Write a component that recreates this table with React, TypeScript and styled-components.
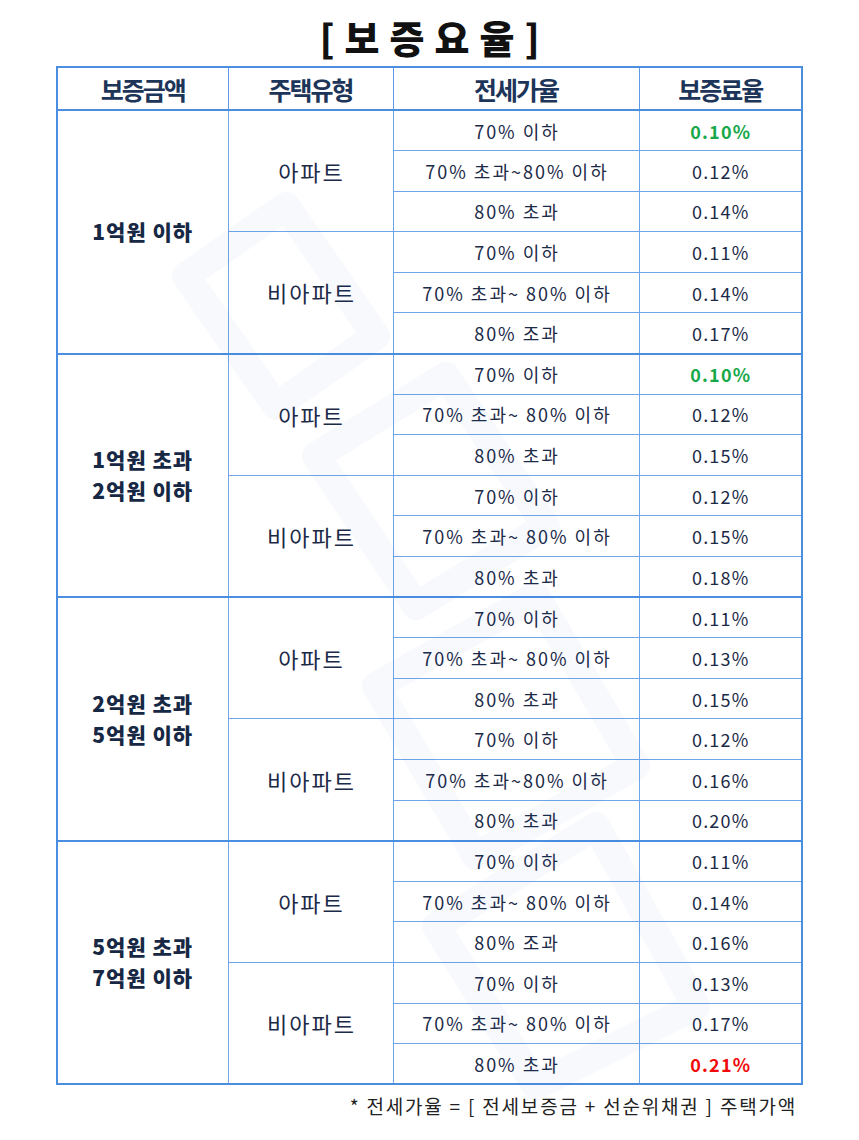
import styled, { createGlobalStyle } from 'styled-components'

const GlobalStyle = createGlobalStyle`
  html, body {
    margin: 0;
    padding: 0;
    background: #fff;
  }
  body {
    font-family: "Noto Sans CJK KR", "Noto Sans", sans-serif;
    color: #1b2a47;
  }
`

type Rate = {
  ratio: string
  rate: string
  tone?: 'good' | 'bad'
}

type HouseGroup = {
  type: string
  rows: Rate[]
}

type AmountGroup = {
  amount: string[]
  houses: HouseGroup[]
}

const data: AmountGroup[] = [
  {
    amount: ['1억원 이하'],
    houses: [
      {
        type: '아파트',
        rows: [
          { ratio: '70% 이하', rate: '0.10%', tone: 'good' },
          { ratio: '70% 초과~80% 이하', rate: '0.12%' },
          { ratio: '80% 초과', rate: '0.14%' },
        ],
      },
      {
        type: '비아파트',
        rows: [
          { ratio: '70% 이하', rate: '0.11%' },
          { ratio: '70% 초과~ 80% 이하', rate: '0.14%' },
          { ratio: '80% 조과', rate: '0.17%' },
        ],
      },
    ],
  },
  {
    amount: ['1억원 초과', '2억원 이하'],
    houses: [
      {
        type: '아파트',
        rows: [
          { ratio: '70% 이하', rate: '0.10%', tone: 'good' },
          { ratio: '70% 초과~ 80% 이하', rate: '0.12%' },
          { ratio: '80% 초과', rate: '0.15%' },
        ],
      },
      {
        type: '비아파트',
        rows: [
          { ratio: '70% 이하', rate: '0.12%' },
          { ratio: '70% 초과~ 80% 이하', rate: '0.15%' },
          { ratio: '80% 초과', rate: '0.18%' },
        ],
      },
    ],
  },
  {
    amount: ['2억원 초과', '5억원 이하'],
    houses: [
      {
        type: '아파트',
        rows: [
          { ratio: '70% 이하', rate: '0.11%' },
          { ratio: '70% 초과~ 80% 이하', rate: '0.13%' },
          { ratio: '80% 초과', rate: '0.15%' },
        ],
      },
      {
        type: '비아파트',
        rows: [
          { ratio: '70% 이하', rate: '0.12%' },
          { ratio: '70% 초과~80% 이하', rate: '0.16%' },
          { ratio: '80% 초과', rate: '0.20%' },
        ],
      },
    ],
  },
  {
    amount: ['5억원 초과', '7억원 이하'],
    houses: [
      {
        type: '아파트',
        rows: [
          { ratio: '70% 이하', rate: '0.11%' },
          { ratio: '70% 초과~ 80% 이하', rate: '0.14%' },
          { ratio: '80% 조과', rate: '0.16%' },
        ],
      },
      {
        type: '비아파트',
        rows: [
          { ratio: '70% 이하', rate: '0.13%' },
          { ratio: '70% 초과~ 80% 이하', rate: '0.17%' },
          { ratio: '80% 초과', rate: '0.21%', tone: 'bad' },
        ],
      },
    ],
  },
]

const Page = styled.div`
  width: 859px;
  height: 1140px;
  box-sizing: border-box;
  display: flex;
  flex-direction: column;
  align-items: center;
`

const Title = styled.h1`
  margin: 0;
  height: 66px;
  display: flex;
  align-items: center;
  justify-content: center;
  padding: 6px 0 0 10px;
  box-sizing: border-box;
  font-size: 38px;
  font-weight: 900;
  letter-spacing: 10px;
  color: #111;
`

const TableWrap = styled.div`
  position: relative;
  width: 747px;
`

const Table = styled.table`
  width: 100%;
  border-collapse: collapse;
  table-layout: fixed;
  border: 2px solid #4b8ddf;
`

const HeadCell = styled.th`
  height: 41px;
  padding: 0;
  font-size: 25px;
  font-weight: 700;
  letter-spacing: -2px;
  color: #1d3559;
  border-left: 1px solid #5e9be6;
  border-bottom: 2px solid #4b8ddf;
`

const Row = styled.tr<{ $groupStart?: boolean }>`
  height: 40.6px;
  border-top: ${(p) => (p.$groupStart ? '2px solid #4b8ddf' : '1px solid #6ea5ea')};
`

const AmountCell = styled.td`
  padding: 0;
  text-align: center;
  vertical-align: middle;
  font-size: 21px;
  font-weight: 800;
  line-height: 31px;
  letter-spacing: 1px;
  color: #172845;
  border-left: 1px solid #6ea5ea;
`

const AmountLine = styled.div`
  height: 31px;
`

const TypeCell = styled.td`
  padding: 0 0 0 2px;
  text-align: center;
  font-size: 22px;
  font-weight: 400;
  letter-spacing: 2px;
  color: #1b2a47;
  border-left: 1px solid #6ea5ea;
  border-top: 1px solid #6ea5ea;
`

const RatioCell = styled.td`
  padding: 0 0 0 2px;
  text-align: center;
  font-size: 18px;
  letter-spacing: 2px;
  color: #1b2a47;
  border-left: 1px solid #6ea5ea;
`

const RateCell = styled.td<{ $tone?: 'good' | 'bad' }>`
  padding: 0 0 0 1px;
  text-align: center;
  font-size: 18px;
  letter-spacing: 1.2px;
  font-weight: ${(p) => (p.$tone ? 700 : 400)};
  color: ${(p) => (p.$tone === 'good' ? '#17a84a' : p.$tone === 'bad' ? '#f00a0a' : '#1b2a47')};
  border-left: 1px solid #6ea5ea;
`

const Watermark = styled.svg`
  position: absolute;
  left: 60px;
  top: 60px;
  width: 640px;
  height: 980px;
  pointer-events: none;
  opacity: 0.03;
`

const Note = styled.p`
  align-self: flex-end;
  margin: 7px 62px 0 0;
  font-size: 19px;
  color: #222;
  letter-spacing: 1.8px;
`

export default function App() {
  return (
    <Page>
      <GlobalStyle />
      <Title>[보증요율]</Title>
      <TableWrap>
        <Table>
          <colgroup>
            <col style={{ width: 171 }} />
            <col style={{ width: 165 }} />
            <col style={{ width: 246 }} />
            <col style={{ width: 163 }} />
          </colgroup>
          <thead>
            <tr>
              <HeadCell>보증금액</HeadCell>
              <HeadCell>주택유형</HeadCell>
              <HeadCell>전세가율</HeadCell>
              <HeadCell>보증료율</HeadCell>
            </tr>
          </thead>
          <tbody>
            {data.map((group, gi) =>
              group.houses.map((house, hi) =>
                house.rows.map((r, ri) => (
                  <Row key={`${gi}-${hi}-${ri}`} $groupStart={gi > 0 && hi === 0 && ri === 0}>
                    {hi === 0 && ri === 0 && (
                      <AmountCell rowSpan={6}>
                        {group.amount.map((line) => (
                          <AmountLine key={line}>{line}</AmountLine>
                        ))}
                      </AmountCell>
                    )}
                    {ri === 0 && <TypeCell rowSpan={3}>{house.type}</TypeCell>}
                    <RatioCell>{r.ratio}</RatioCell>
                    <RateCell $tone={r.tone}>{r.rate}</RateCell>
                  </Row>
                )),
              ),
            )}
          </tbody>
        </Table>
        <Watermark viewBox="0 0 640 980">
          <g fill="none" stroke="#1f5fd0" strokeWidth="28" strokeLinejoin="round">
            <path d="M70 150 L170 80 L260 210 L160 280 Z" />
            <path d="M200 330 L330 250 L430 400 L300 480 Z" />
            <path d="M260 560 L420 470 L520 640 L360 730 Z" />
            <path d="M320 800 L480 700 L580 880 L420 960 Z" />
          </g>
        </Watermark>
      </TableWrap>
      <Note>* 전세가율 = [ 전세보증금 + 선순위채권 ] 주택가액</Note>
    </Page>
  )
}
